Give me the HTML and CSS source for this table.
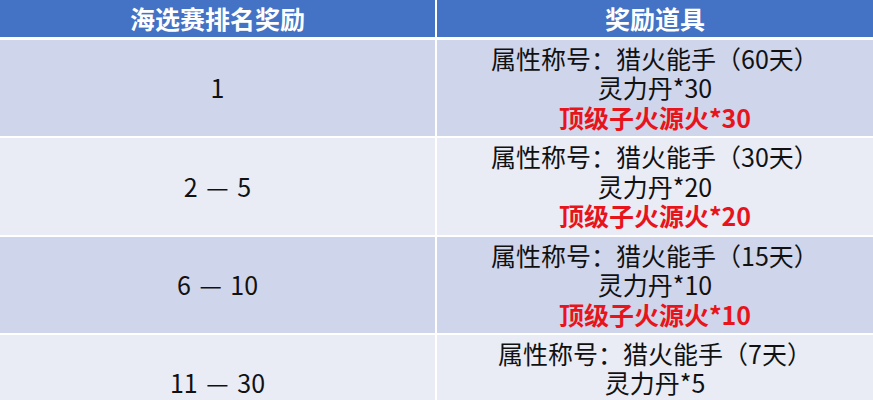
FILE: index.html
```html
<!DOCTYPE html>
<html lang="zh-CN">
<head>
<meta charset="utf-8">
<link rel="stylesheet" href="styles.css">
</head>
<body>
<div class="table">
  <div class="cell head">海选赛排名奖励</div>
  <div class="cell head">奖励道具</div>

  <div class="cell odd rank">1</div>
  <div class="cell odd items">
    <div>属性称号：猎火能手（60天）</div>
    <div>灵力丹*30</div>
    <div class="red">顶级子火源火*30</div>
  </div>

  <div class="cell even rank">2 — 5</div>
  <div class="cell even items">
    <div>属性称号：猎火能手（30天）</div>
    <div>灵力丹*20</div>
    <div class="red">顶级子火源火*20</div>
  </div>

  <div class="cell odd rank">6 — 10</div>
  <div class="cell odd items">
    <div>属性称号：猎火能手（15天）</div>
    <div>灵力丹*10</div>
    <div class="red">顶级子火源火*10</div>
  </div>

  <div class="cell even rank">11 — 30</div>
  <div class="cell even items">
    <div>属性称号：猎火能手（7天）</div>
    <div>灵力丹*5</div>
    <div class="red">顶级子火源火*5</div>
  </div>
</div>
</body>
</html>
```

FILE: styles.css
```css
html, body {
  margin: 0;
  padding: 0;
  background: #ffffff;
  overflow: hidden;
}
.table {
  display: grid;
  grid-template-columns: 435px 436px;
  grid-template-rows: 38px 96px 97px 96px 96px;
  column-gap: 2px;
  row-gap: 2px;
  width: 873px;
  font-family: "Noto Sans CJK SC", "Noto Sans", sans-serif;
  color: #111111;
}
.cell {
  display: flex;
  flex-direction: column;
  align-items: center;
  justify-content: center;
  text-align: center;
  font-size: 25px;
  line-height: 29.5px;
}
.rank {
  word-spacing: 3px;
}
.head {
  background: #4472c4;
  color: #ffffff;
  font-weight: 700;
  margin-bottom: 1px;
}
.odd {
  background: #cfd5ea;
}
.even {
  background: #e9ebf5;
}
.red {
  color: #e8141b;
  font-weight: 700;
}
```
